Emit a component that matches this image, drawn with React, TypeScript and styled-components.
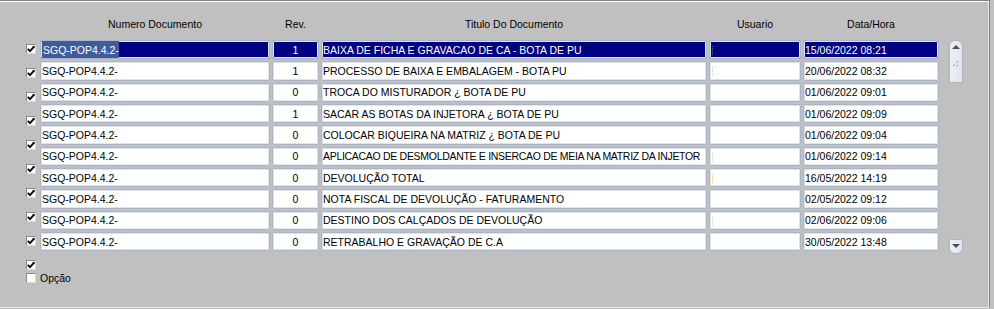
import { createGlobalStyle } from "styled-components";
import styled from "styled-components";

const GlobalStyle = createGlobalStyle`
	html, body {
		margin: 0;
		padding: 0;
		background: #c0c0c0;
		font-family: "Liberation Sans", Arial, sans-serif;
	}
`;

interface DocRow {
	numero: string;
	rev: string;
	titulo: string;
	usuario: string;
	data: string;
}

const rows: DocRow[] = [
	{ numero: "SGQ-POP4.4.2-", rev: "1", titulo: "BAIXA DE FICHA E GRAVACAO DE CA - BOTA DE PU", usuario: "", data: "15/06/2022 08:21" },
	{ numero: "SGQ-POP4.4.2-", rev: "1", titulo: "PROCESSO DE BAIXA E EMBALAGEM - BOTA PU", usuario: "", data: "20/06/2022 08:32" },
	{ numero: "SGQ-POP4.4.2-", rev: "0", titulo: "TROCA DO MISTURADOR ¿ BOTA DE PU", usuario: "", data: "01/06/2022 09:01" },
	{ numero: "SGQ-POP4.4.2-", rev: "1", titulo: "SACAR AS BOTAS DA INJETORA ¿ BOTA DE PU", usuario: "", data: "01/06/2022 09:09" },
	{ numero: "SGQ-POP4.4.2-", rev: "0", titulo: "COLOCAR BIQUEIRA NA MATRIZ ¿ BOTA DE PU", usuario: "", data: "01/06/2022 09:04" },
	{ numero: "SGQ-POP4.4.2-", rev: "0", titulo: "APLICACAO DE DESMOLDANTE E INSERCAO DE MEIA NA MATRIZ DA INJETOR", usuario: "", data: "01/06/2022 09:14" },
	{ numero: "SGQ-POP4.4.2-", rev: "0", titulo: "DEVOLUÇÃO TOTAL", usuario: "", data: "16/05/2022 14:19" },
	{ numero: "SGQ-POP4.4.2-", rev: "0", titulo: "NOTA FISCAL DE DEVOLUÇÃO - FATURAMENTO", usuario: "", data: "02/05/2022 09:12" },
	{ numero: "SGQ-POP4.4.2-", rev: "0", titulo: "DESTINO DOS CALÇADOS DE DEVOLUÇÃO", usuario: "", data: "02/06/2022 09:06" },
	{ numero: "SGQ-POP4.4.2-", rev: "0", titulo: "RETRABALHO E GRAVAÇÃO DE C.A", usuario: "", data: "30/05/2022 13:48" },
];

const COLUMNS = "230px 47px 386px 92px 136px";

const Panel = styled.div`
	box-sizing: border-box;
	width: 990px;
	height: 308px;
	border-top: 1px solid #808080;
	border-right: 1px solid #808080;
	box-shadow: inset 0 1px 0 #ffffff, inset -1px 0 0 #e8e8e8;
	border-bottom: 1px solid #e8e8e8;
	display: flex;
	flex-direction: column;
`;

const HeaderRow = styled.div`
	display: grid;
	grid-template-columns: ${COLUMNS};
	column-gap: 2px;
	margin: 15px 0 0 40px;
	height: 16px;
	align-items: center;
`;

const HeaderCell = styled.div`
	text-align: center;
	font-size: 10.5px;
	color: #000;
	white-space: nowrap;
`;

const Body = styled.div`
	display: flex;
	align-items: flex-start;
	margin-top: 8px;
	padding-left: 26px;
`;

const CheckColumn = styled.div`
	display: flex;
	flex-direction: column;
	width: 10px;
	margin-right: 4px;
	padding-top: 4px;
	gap: 14px;
`;

const Box = styled.span`
	box-sizing: border-box;
	display: flex;
	align-items: center;
	justify-content: center;
	width: 10px;
	height: 10px;
	flex: none;
	background: #ffffff;
	border: 1px solid;
	border-color: #8a8a8a #d8d8d8 #d8d8d8 #8a8a8a;
`;

const OptionLabel = styled.label`
	display: flex;
	align-items: center;
	gap: 4px;
	margin-top: -12px;
	font-size: 10.5px;
	white-space: nowrap;
	color: #000;
`;

const Grid = styled.div`
	display: grid;
	grid-template-columns: ${COLUMNS};
	grid-auto-rows: 19.33px;
	gap: 2px;
`;

const Field = styled.div<{ $align?: "left" | "center"; $selected?: boolean; $tight?: boolean }>`
	box-sizing: border-box;
	position: relative;
	display: flex;
	align-items: center;
	justify-content: ${(p) => (p.$align === "center" ? "center" : "flex-start")};
	padding: 0 1px;
	border: 1px solid #a9b6ca;
	border-radius: 2px;
	box-shadow: inset 0 0 0 1px #dde4ee;
	background: ${(p) => (p.$selected ? "#000080" : "#ffffff")};
	color: ${(p) => (p.$selected ? "#ffffff" : "#000000")};
	font-size: 10.5px;
	letter-spacing: ${(p) => (p.$tight ? "-0.3px" : "0")};
	white-space: nowrap;
	overflow: hidden;
`;

const Highlight = styled.span`
	background: #3e5c9c;
	color: #ffffff;
	padding: 3px 0 3px 1px;
`;

const Caret = styled.span<{ $selected?: boolean }>`
	position: absolute;
	left: 2px;
	top: 5px;
	height: 9px;
	border-left: 1px dotted ${(p) => (p.$selected ? "#4a6aa8" : "#efc98a")};
`;

const ScrollColumn = styled.div`
	display: flex;
	flex-direction: column;
	justify-content: space-between;
	height: 214px;
	margin-left: 10px;
`;

const ScrollTop = styled.div`
	box-sizing: border-box;
	width: 14px;
	height: 43px;
	border: 1px solid #aab4c4;
	border-radius: 6px 6px 1px 1px;
	background: linear-gradient(to right, #eef1f6, #dfe4ec);
	display: flex;
	flex-direction: column;
	align-items: center;
	padding-top: 4px;
	gap: 11px;
`;

const ScrollBottom = styled.div`
	box-sizing: border-box;
	width: 14px;
	height: 15px;
	border: 1px solid #aab4c4;
	border-radius: 1px 1px 6px 6px;
	background: linear-gradient(to right, #eef1f6, #dfe4ec);
	display: flex;
	justify-content: center;
	padding-top: 4px;
`;

const Check = () => (
	<svg width="8" height="8" viewBox="0 0 8 8">
		<path d="M0.8 3.8 L3 6.2 L7.4 1.2" fill="none" stroke="#000" strokeWidth="1.8" />
	</svg>
);

export default function App() {
	return (
		<>
			<GlobalStyle />
			<Panel>
				<HeaderRow>
					<HeaderCell>Numero Documento</HeaderCell>
					<HeaderCell>Rev.</HeaderCell>
					<HeaderCell>Titulo Do Documento</HeaderCell>
					<HeaderCell>Usuario</HeaderCell>
					<HeaderCell>Data/Hora</HeaderCell>
				</HeaderRow>
				<Body>
					<CheckColumn>
						{rows.map((_, i) => (
							<Box key={i}>
								<Check />
							</Box>
						))}
						<OptionLabel>
							<Box />
							Opção
						</OptionLabel>
					</CheckColumn>
					<Grid>
						{rows.map((r, i) => {
							const sel = i === 0;
							return [
								<Field key={`n${i}`} $selected={sel}>
									{sel ? <Highlight>{r.numero}</Highlight> : r.numero}
								</Field>,
								<Field key={`r${i}`} $selected={sel} $align="center">
									{r.rev}
								</Field>,
								<Field key={`t${i}`} $selected={sel} $tight={r.titulo.length > 60}>
									{r.titulo}
								</Field>,
								<Field key={`u${i}`} $selected={sel}>
									{(i < 2 || i === 5 || i === 6 || i === 8) && <Caret $selected={sel} />}
									{r.usuario}
								</Field>,
								<Field key={`d${i}`} $selected={sel}>
									{r.data}
								</Field>,
							];
						})}
					</Grid>
					<ScrollColumn>
						<ScrollTop>
							<svg width="8" height="5" viewBox="0 0 8 5">
								<path d="M4 0 L8 4 L0 4 Z" fill="#4a4e5c" />
							</svg>
							<svg width="6" height="6" viewBox="0 0 6 6">
								<rect x="4" y="0" width="1" height="1" fill="#7a8090" />
								<rect x="3" y="1" width="1" height="1" fill="#aab0bc" />
								<rect x="1" y="3" width="1" height="1" fill="#aab0bc" />
								<rect x="0" y="4" width="1" height="1" fill="#7a8090" />
								<rect x="4" y="4" width="1" height="1" fill="#7a8090" />
								<rect x="3" y="5" width="1" height="1" fill="#aab0bc" />
							</svg>
						</ScrollTop>
						<ScrollBottom>
							<svg width="8" height="5" viewBox="0 0 8 5">
								<path d="M0 0 L8 0 L4 4 Z" fill="#4a4e5c" />
							</svg>
						</ScrollBottom>
					</ScrollColumn>
				</Body>
			</Panel>
		</>
	);
}
